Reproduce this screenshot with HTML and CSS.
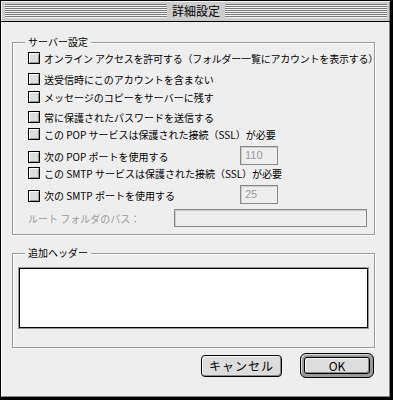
FILE: index.html
```html
<!DOCTYPE html>
<html lang="ja">
<head>
<meta charset="utf-8">
<title>詳細設定</title>
<link rel="stylesheet" href="styles.css">
</head>
<body>
<div class="window">
  <div class="titlebar">
    <div class="stripes"></div>
    <div class="title">詳細設定</div>
    <div class="stripes"></div>
  </div>
  <div class="content">
    <div class="group group-server">
      <div class="legend">サーバー設定</div>
      <div class="rows">
        <div class="row"><span class="cb"></span><span class="tight">オンライン アクセスを許可する（フォルダー一覧にアカウントを表示する）</span></div>
        <div class="row"><span class="cb"></span><span>送受信時にこのアカウントを含まない</span></div>
        <div class="row"><span class="cb"></span><span>メッセージのコピーをサーバーに残す</span></div>
        <div class="row"><span class="cb"></span><span>常に保護されたパスワードを送信する</span></div>
        <div class="row"><span class="cb"></span><span>この POP サービスは保護された接続（SSL）が必要</span></div>
        <div class="row port-row"><div class="check"><span class="cb"></span><span>次の POP ポートを使用する</span></div><div class="field">110</div></div>
        <div class="row"><span class="cb"></span><span>この SMTP サービスは保護された接続（SSL）が必要</span></div>
        <div class="row port-row"><div class="check"><span class="cb"></span><span>次の SMTP ポートを使用する</span></div><div class="field">25</div></div>
        <div class="row root-row"><span class="disabled-label">ルート フォルダのパス：</span><div class="field wide"></div></div>
      </div>
    </div>
    <div class="group group-headers">
      <div class="legend">追加ヘッダー</div>
      <div class="textarea"></div>
    </div>
    <div class="buttons">
      <div class="btn cancel">キャンセル</div>
      <div class="default-ring"><div class="btn ok">OK</div></div>
    </div>
  </div>
</div>
</body>
</html>
```
FILE: styles.css
```css
html, body {
  margin: 0;
  padding: 0;
}
body {
  width: 393px;
  height: 400px;
  overflow: hidden;
  background: #eeeeee;
  color: #000;
  font-family: "Noto Sans CJK JP", "Liberation Sans", sans-serif;
  font-size: 10px;
}
.window {
  box-sizing: border-box;
  width: 393px;
  height: 400px;
  border-style: solid;
  border-color: #000;
  border-width: 1px 3px 3px 1px;
  display: flex;
  flex-direction: column;
  background: #eeeeee;
}
.titlebar {
  height: 20px;
  flex: none;
  border-bottom: 1px solid #000;
  background: #cccccc;
  display: flex;
  align-items: center;
  padding: 0 3px 0 4px;
  box-shadow: inset 1px 1px 0 #f4f4f4, inset -1px 0 0 #888;
}
.stripes {
  flex: 1;
  height: 14px;
  background: repeating-linear-gradient(to bottom, #777 0 1px, #f6f6f6 1px 2px);
}
.title {
  padding: 0 5px;
  font-size: 12px;
  line-height: 20px;
}
.content {
  flex: 1;
  border-left: 1px solid #fff;
  border-right: 1px solid #888;
  border-bottom: 1px solid #888;
  padding: 20px 14px 0 10px;
}
.group {
  border: 1px solid #999;
  box-shadow: 1px 1px 0 #fff, inset 1px 1px 0 #fff;
}
.group-server {
  padding: 0 0 5px 15px;
}
.group-headers {
  margin-top: 18px;
  padding: 0 6px 19px 6px;
}
.legend {
  width: fit-content;
  margin: -8px 0 0 9px;
  padding: 0 3px;
  background: #eeeeee;
  line-height: 14px;
}
.group-server .legend {
  margin-left: -3px;
}
.group-headers .legend {
  margin-left: 6px;
}
.rows {
  display: grid;
  grid-template-rows: 21px 18px 20px 17px 22px 17px 22px 20px 22px;
  margin-top: 1px;
}
.row {
  display: flex;
  align-items: center;
  height: 16px;
  white-space: nowrap;
}
.tight {
  letter-spacing: -0.22px;
}
.check {
  display: flex;
  align-items: center;
}
.cb {
  flex: none;
  width: 12px;
  height: 12px;
  box-sizing: border-box;
  border: 1px solid #000;
  background: #dddddd;
  box-shadow: inset 1px 1px 0 #fff, inset -1px -1px 0 #999;
  margin-right: 4px;
}
.port-row {
  display: grid;
  grid-template-columns: 212px 38px;
  align-items: center;
}
.field {
  box-sizing: border-box;
  height: 19px;
  border: 1px solid #888;
  box-shadow: inset 1px 1px 0 #ccc;
  background: #eeeeee;
  color: #999;
  font-family: "Liberation Sans", sans-serif;
  font-size: 11px;
  line-height: 17px;
  padding-left: 4px;
}
.port-row .field {
  margin-top: -2px;
}
.root-row {
  display: grid;
  grid-template-columns: 146px 193px;
  align-items: center;
  height: 22px;
}
.root-row .field {
  height: 18px;
}
.disabled-label {
  color: #999;
}
.textarea {
  margin-top: 8px;
  height: 60px;
  box-sizing: border-box;
  border: 1px solid #000;
  background: #fff;
  box-shadow: 0 0 0 1px #999;
}
.buttons {
  display: flex;
  justify-content: flex-end;
  align-items: center;
  gap: 18px;
  margin: 5px 1px 0 0;
}
.btn {
  box-sizing: border-box;
  display: flex;
  align-items: center;
  justify-content: center;
  border: 1px solid #000;
  border-radius: 4px;
  background: #dddddd;
  box-shadow: inset 1px 1px 0 #fff, inset -1px -1px 0 #888;
  font-size: 12px;
}
.cancel {
  width: 81px;
  height: 22px;
  letter-spacing: 1px;
}
.default-ring {
  box-sizing: border-box;
  width: 74px;
  height: 25px;
  border: 1px solid #000;
  border-radius: 6px;
  padding: 3px;
  background: #999;
  box-shadow: inset 1px 1px 0 #ddd;
}
.ok {
  width: 100%;
  height: 100%;
  border-radius: 3px;
}
```
